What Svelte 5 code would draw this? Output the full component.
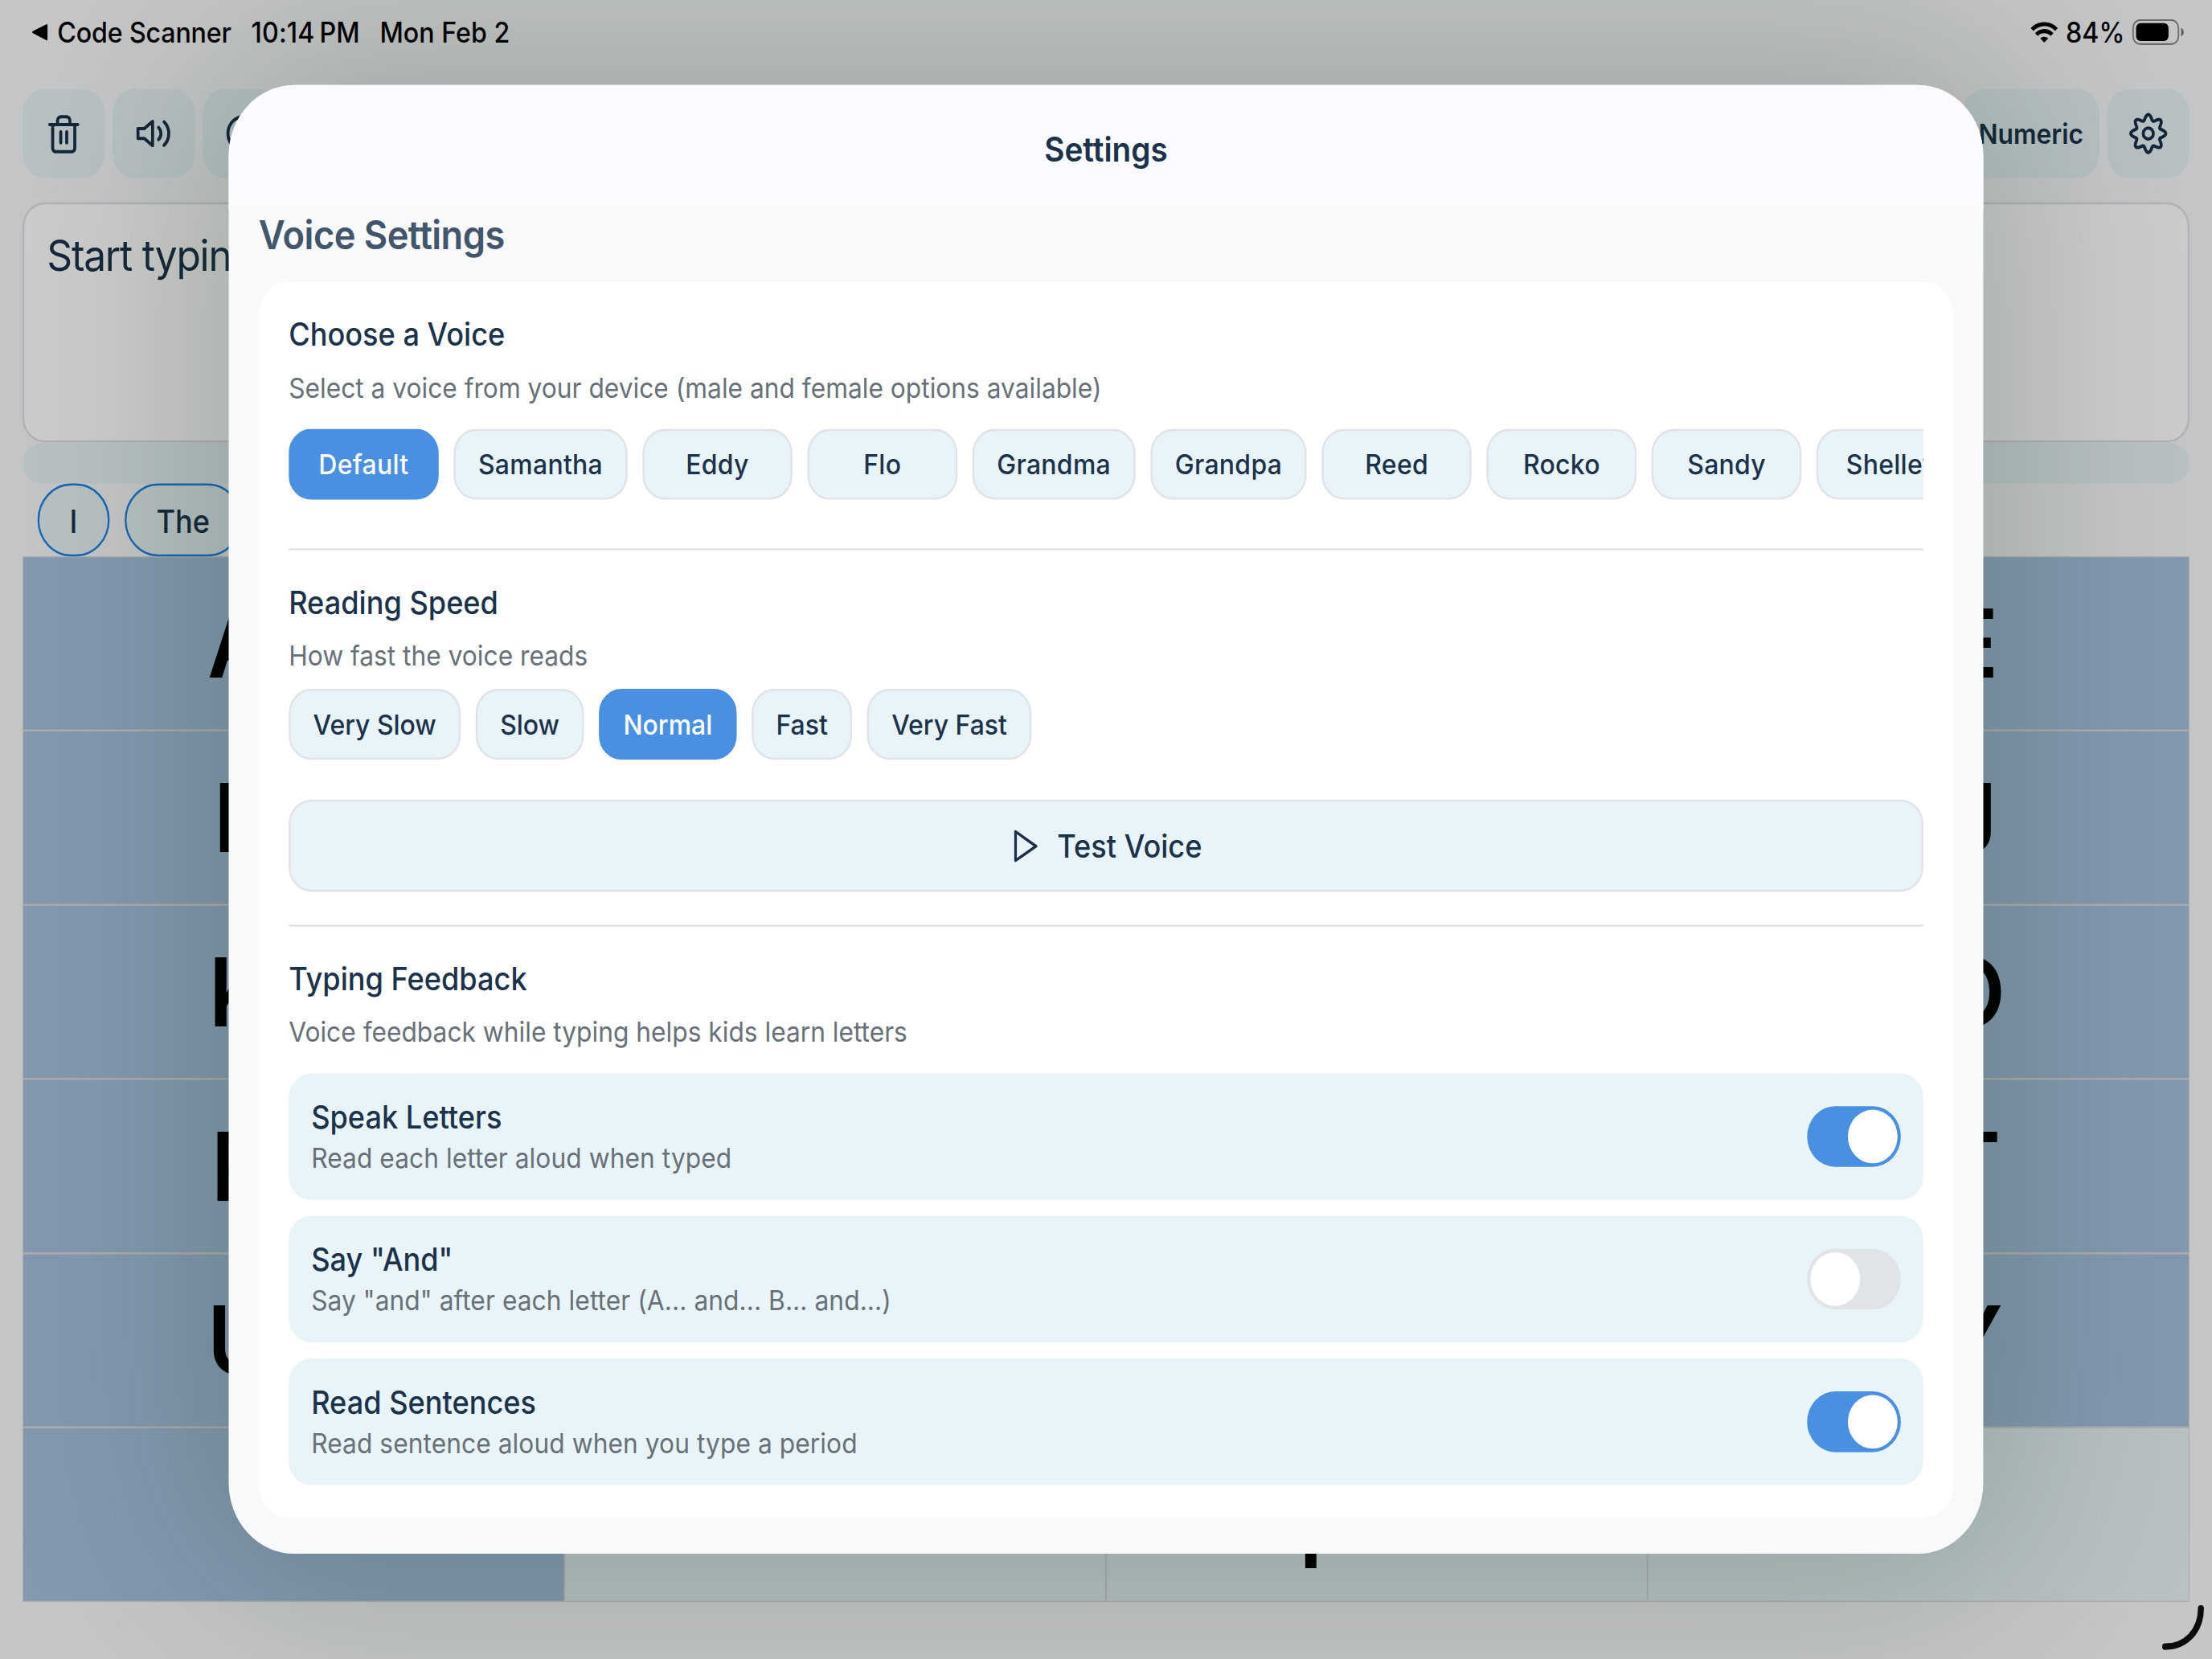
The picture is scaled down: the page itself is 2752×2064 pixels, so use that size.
<script lang="ts">
  const voices = ["Default", "Samantha", "Eddy", "Flo", "Grandma", "Grandpa", "Reed", "Rocko", "Sandy", "Shelley"];
  const speeds = ["Very Slow", "Slow", "Normal", "Fast", "Very Fast"];
  const letterRows = ["ABCDE", "FGHIJ", "KLMNO", "PQRST", "UVWXY"];

  let voice = $state("Default");
  let speed = $state("Normal");
  let feedback = $state([
    { title: "Speak Letters", body: "Read each letter aloud when typed", on: true },
    { title: 'Say "And"', body: 'Say "and" after each letter (A... and... B... and...)', on: false },
    { title: "Read Sentences", body: "Read sentence aloud when you type a period", on: true },
  ]);

  // eight soft lobes around the hub
  function gearPath() {
    const pts: string[] = [];
    for (let i = 0; i < 160; i++) {
      const a = (i / 160) * Math.PI * 2;
      const r = 8 + 1.35 * Math.cos(8 * a);
      pts.push(`${(12 + r * Math.sin(a)).toFixed(2)} ${(12 - r * Math.cos(a)).toFixed(2)}`);
    }
    return `M${pts.join("L")}Z`;
  }
  const gear = gearPath();
</script>

<div class="screen">
  <div class="device">
    <div class="app">
      <div class="statusbar"></div>

      <div class="toolbar">
        <button type="button" class="tool" aria-label="Clear">
          <svg viewBox="0 0 24 24" width="24" height="24">
            <path d="M4.5 7.6h15M6.1 7.6v11.7a1.7 1.7 0 0 0 1.7 1.7h8.4a1.7 1.7 0 0 0 1.7-1.7V7.6M8.7 7.4V5.5A1.8 1.8 0 0 1 10.5 3.7h3A1.8 1.8 0 0 1 15.3 5.5v1.9M10.4 11.2v5.4M13.6 11.2v5.4" />
          </svg>
        </button>
        <button type="button" class="tool" aria-label="Speak">
          <svg viewBox="0 0 24 24" width="24" height="24">
            <path d="M3.6 9.6h3.3L11.4 6v12l-4.5-3.6H3.6zM14.6 9c1.7 1.8 1.7 4.2 0 6M17.5 6.2c3.4 3.3 3.4 8.3 0 11.6" />
          </svg>
        </button>
        <button type="button" class="tool" aria-label="Help">
          <svg viewBox="0 0 24 24" width="24" height="24">
            <circle cx="12" cy="12" r="8.4" />
          </svg>
        </button>
        <span class="spacer"></span>
        <button type="button" class="tool wide">Numeric</button>
        <button type="button" class="tool" aria-label="Settings">
          <svg viewBox="0 0 24 24" width="24" height="24">
            <path d={gear} />
            <circle cx="12" cy="12" r="2.7" />
          </svg>
        </button>
      </div>

      <div class="draft">Start typing</div>
      <div class="strip"></div>

      <div class="suggestions">
        <span class="word">I</span>
        <span class="word">The</span>
      </div>

      <div class="keyboard">
        {#each letterRows as row}
          <div class="keys">
            {#each row as letter}
              <span class="key">{letter}</span>
            {/each}
          </div>
        {/each}
        <div class="keys">
          <span class="key">Z</span>
          <span class="key light"></span>
          <span class="key light">Space</span>
          <span class="key light"></span>
        </div>
      </div>
    </div>

    <div class="dim"></div>

    <div class="status">
      <svg class="back" viewBox="0 0 9 9" width="9" height="9"><path d="M8.2.5 1 3.9a.6.6 0 0 0 0 1L8.2 8.4a.5.5 0 0 0 .7-.5V1a.5.5 0 0 0-.7-.5z" /></svg>
      <span class="from">Code Scanner</span>
      <span class="time">10:14<i>PM</i></span>
      <span class="date">Mon Feb 2</span>
      <span class="spacer"></span>
      <svg class="wifi" viewBox="0 0 15 11" width="15" height="11">
        <path d="M1 4.1a9.3 9.3 0 0 1 13 0M3.3 6.6a5.9 5.9 0 0 1 8.4 0" />
        <path class="dot" d="M7.5 10.6 5.4 8.5a3 3 0 0 1 4.2 0z" />
      </svg>
      <span class="percent">84%</span>
      <svg class="battery" viewBox="0 0 28 13" width="28" height="13">
        <rect class="shell" x=".4" y=".4" width="24.2" height="11.9" rx="3.8" />
        <rect x="2" y="1.9" width="17.3" height="8.9" rx="2.4" />
        <path class="nub" d="M26 4.3c1 .4 1.5 1.2 1.5 2.1s-.5 1.7-1.5 2.1z" />
      </svg>
    </div>

    <div class="sheet" role="dialog" aria-modal="true" aria-labelledby="sheet-title">
      <header><h1 id="sheet-title">Settings</h1></header>
      <h2>Voice Settings</h2>

      <section class="card">
        <h3>Choose a Voice</h3>
        <p class="hint">Select a voice from your device (male and female options available)</p>
        <div class="chips voices">
          {#each voices as name}
            <button type="button" class="chip" class:active={voice === name} onclick={() => (voice = name)}>{name}</button>
          {/each}
        </div>

        <hr class="after-voices" />

        <h3>Reading Speed</h3>
        <p class="hint">How fast the voice reads</p>
        <div class="chips speeds">
          {#each speeds as name}
            <button type="button" class="chip" class:active={speed === name} onclick={() => (speed = name)}>{name}</button>
          {/each}
        </div>

        <button type="button" class="test">
          <svg viewBox="0 0 14 18" width="14" height="18"><path d="M1.5 1.8v14.3L12.4 9z" /></svg>
          <span>Test Voice</span>
        </button>

        <hr />

        <h3>Typing Feedback</h3>
        <p class="hint">Voice feedback while typing helps kids learn letters</p>
        <div class="options">
          {#each feedback as item}
            <div class="option">
              <div>
                <h4>{item.title}</h4>
                <p>{item.body}</p>
              </div>
              <button
                type="button"
                class="toggle"
                class:on={item.on}
                role="switch"
                aria-checked={item.on}
                aria-label={item.title}
                onclick={() => (item.on = !item.on)}
              ><span></span></button>
            </div>
          {/each}
        </div>
      </section>
    </div>

    <svg class="corner" viewBox="0 0 26 26" width="26" height="26"><path d="M22.1 3c0 11-8 18.9-19.1 18.9" /></svg>
  </div>
</div>

<style>
  :global(body) {
    margin: 0;
    background: #c5c6c8;
  }

  .screen {
    width: 2752px;
    height: 2064px;
    overflow: hidden;
  }

  /* sizes below are in points of a 1180 x 820 display;
     the zoom keeps fractional points from snapping */
  .device {
    position: relative;
    width: 1180px;
    height: 820px;
    overflow: hidden;
    zoom: 4;
    transform: scale(0.58305, 0.62927);
    transform-origin: 0 0;
    font-family: Inter, "Liberation Sans", sans-serif;
    color: #1c324a;
  }

  h1, h2, h3, h4, p {
    margin: 0;
  }

  button {
    font: inherit;
    color: inherit;
    border: 0;
    padding: 0;
    margin: 0;
    box-sizing: border-box;
  }

  svg {
    display: block;
    flex: none;
  }

  .spacer {
    flex: 1;
  }

  .app {
    height: 820px;
    padding: 0 12px;
    background: #f7f8fa;
  }

  .statusbar {
    height: 44px;
  }

  .toolbar {
    display: flex;
    gap: 4px;
    height: 44px;
  }

  .tool {
    display: grid;
    place-items: center;
    width: 44px;
    height: 44px;
    border-radius: 12px;
    background: #e6f2f6;
  }

  .tool svg {
    fill: none;
    stroke: #1b3048;
    stroke-width: 1.6;
    stroke-linecap: round;
    stroke-linejoin: round;
  }

  .tool.wide {
    width: auto;
    padding: 0 8.6px;
    font-size: 13.6px;
    font-weight: 600;
  }

  .draft {
    box-sizing: border-box;
    height: 118.8px;
    margin-top: 12px;
    padding: 12.2px 12px;
    border: 1px solid #dcdfe3;
    border-radius: 12px;
    background: #fff;
    font-size: 21.3px;
    line-height: 26px;
    letter-spacing: -0.025em;
  }

  .strip {
    height: 20px;
    margin-top: 0.2px;
    border-radius: 10px;
    background: #e6f2f6;
  }

  .suggestions {
    display: flex;
    gap: 8px;
    height: 36px;
    padding-left: 8px;
  }

  .word {
    box-sizing: border-box;
    min-width: 38.4px;
    height: 36px;
    padding: 0 16px;
    border: 1px solid #2080e0;
    border-radius: 18px;
    background: #e6f2f6;
    text-align: center;
    font-size: 15.5px;
    font-weight: 500;
    line-height: 35.4px;
  }

  .keyboard {
    box-sizing: border-box;
    height: 516.7px;
    border: 0.5px solid #d6d8db;
    display: grid;
    grid-template-rows: repeat(6, 1fr);
    gap: 1px;
    background: #d6d8db;
  }

  .keys {
    display: grid;
    grid-auto-flow: column;
    grid-auto-columns: minmax(0, 1fr);
  }

  .keys:last-child {
    gap: 0.8px;
  }

  .key {
    display: grid;
    place-items: center;
    background: #a5c0dd;
    color: #000;
    font-size: 47px;
    font-weight: 600;
    line-height: 56px;
    letter-spacing: 0.01em;
  }

  .key.light {
    background: #e6f2f6;
  }

  .dim {
    position: absolute;
    inset: 0;
    background: rgba(0, 0, 0, 0.2);
  }

  .status {
    position: absolute;
    inset: 0 0 auto 0;
    display: flex;
    align-items: center;
    height: 32px;
    padding: 0 14.5px 0 16.6px;
    box-sizing: border-box;
    font-size: 13.8px;
    font-weight: 500;
    line-height: 32px;
    color: #000;
    z-index: 2;
  }

  .from {
    margin-left: 5px;
    width: 103.4px;
    letter-spacing: -0.005em;
  }

  .time {
    width: 68.6px;
    letter-spacing: 0.004em;
  }

  .time i {
    font-style: normal;
    margin-left: 2.6px;
  }

  .wifi {
    margin-right: 4.1px;
    fill: none;
    stroke: #000;
    stroke-width: 2;
  }

  .wifi .dot {
    fill: #000;
    stroke: none;
  }

  .percent {
    width: 35.5px;
  }

  .battery .shell {
    fill: none;
    stroke: rgba(0, 0, 0, 0.45);
    stroke-width: 0.8;
  }

  .battery .nub {
    fill: rgba(0, 0, 0, 0.5);
  }

  .sheet {
    position: absolute;
    top: 42px;
    left: 122px;
    width: 936px;
    height: 726px;
    box-sizing: border-box;
    padding: 0 16px;
    border-radius: 35px;
    background: #f8f9fb;
    box-shadow: 0 0 105px 16px rgba(0, 42, 6, 0.2);
  }

  header {
    display: flex;
    align-items: center;
    justify-content: center;
    height: 62px;
    padding-top: 2px;
    box-sizing: border-box;
    margin: 0 -16px;
    border-radius: 35px 35px 0 0;
    background: linear-gradient(#fafbfe 80%, #f9fafc);
  }

  h1 {
    font-size: 16.6px;
    font-weight: 600;
    line-height: 20px;
  }

  h2 {
    margin-bottom: 11.3px;
    font-size: 19.4px;
    font-weight: 600;
    line-height: 24px;
    letter-spacing: -0.012em;
    color: #43556a;
  }

  .card {
    height: 610.7px;
    box-sizing: border-box;
    padding: 16px;
    border-radius: 16px;
    background: #fff;
  }

  h3, h4 {
    font-size: 15.5px;
    font-weight: 500;
    line-height: 20px;
  }

  .hint, .option p {
    font-size: 13.6px;
    line-height: 18px;
    color: #687078;
  }

  .hint {
    margin-top: 7.1px;
  }

  .chips {
    display: flex;
    gap: 8px;
    overflow: hidden;
  }

  .voices {
    margin-top: 11.6px;
  }

  .voices .chip {
    min-width: 80px;
    padding: 0 12.1px;
    letter-spacing: 0.009em;
  }

  .speeds {
    margin-top: 7.6px;
  }

  .chip {
    flex: none;
    height: 35px;
    padding: 0 12px;
    border: 1px solid #dfe3e8;
    border-radius: 12px;
    background: #e8f4f8;
    font-size: 13.7px;
    font-weight: 500;
  }

  .chip.active {
    background: #4a90e2;
    border-color: #4a90e2;
    color: #fff;
  }

  hr {
    height: 1px;
    margin: 16.2px 0 15.9px;
    border: 0;
    background: #e3e4e6;
  }

  .after-voices {
    margin-top: 24px;
  }

  .test {
    display: flex;
    align-items: center;
    justify-content: center;
    gap: 9.8px;
    width: 100%;
    height: 45.6px;
    margin-top: 19.6px;
    padding: 0.6px 0 0 1.4px;
    border: 1px solid #dfe3e8;
    border-radius: 12px;
    background: #e8f4f8;
    font-size: 15.5px;
    font-weight: 500;
  }

  .test svg {
    fill: none;
    stroke: #1b3048;
    stroke-width: 1.4;
    stroke-linejoin: round;
  }

  .options {
    display: grid;
    gap: 8px;
    margin-top: 11.5px;
  }

  .option {
    display: flex;
    align-items: center;
    justify-content: space-between;
    height: 62.5px;
    padding: 0 12px;
    border-radius: 12px;
    background: #e8f4f8;
  }

  .option p {
    margin-top: 0.9px;
    letter-spacing: 0.002em;
  }

  .toggle {
    width: 50px;
    height: 30px;
    padding: 1.8px;
    border-radius: 15px;
    background: #e0e3e8;
    display: flex;
  }

  .toggle span {
    width: 26.4px;
    height: 26.4px;
    border-radius: 50%;
    background: #fff;
  }

  .toggle.on {
    justify-content: flex-end;
    background: #4a90e2;
  }

  .corner {
    position: absolute;
    left: 1152px;
    top: 792px;
    fill: none;
    stroke: #0c0c0c;
    stroke-width: 3.2;
    stroke-linecap: round;
  }
</style>
